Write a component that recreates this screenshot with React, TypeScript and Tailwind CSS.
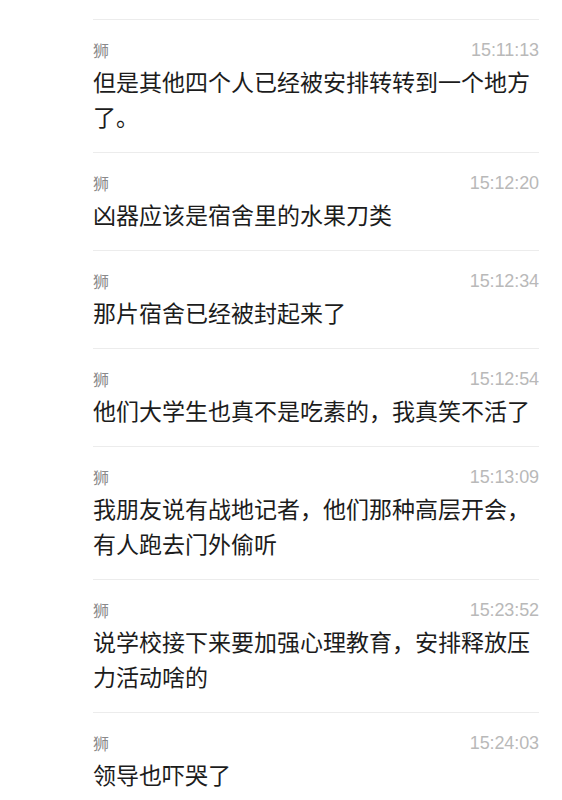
import React, { FC } from "react";

type Msg = {
    name: string;
    time: string;
    text: string;
};

const mensajes: Msg[] = [
    { name: "狮", time: "15:11:13", text: "但是其他四个人已经被安排转转到一个地方了。" },
    { name: "狮", time: "15:12:20", text: "凶器应该是宿舍里的水果刀类" },
    { name: "狮", time: "15:12:34", text: "那片宿舍已经被封起来了" },
    { name: "狮", time: "15:12:54", text: "他们大学生也真不是吃素的，我真笑不活了" },
    { name: "狮", time: "15:13:09", text: "我朋友说有战地记者，他们那种高层开会，有人跑去门外偷听" },
    { name: "狮", time: "15:23:52", text: "说学校接下来要加强心理教育，安排释放压力活动啥的" },
    { name: "狮", time: "15:24:03", text: "领导也吓哭了" },
];

const Item: FC<{ msg: Msg }> = ({ msg }) => {
    return (
        <div className="border-t border-[#ececec] pt-[18px] pb-[18px]">
            <div className="flex justify-between items-center h-[24px]">
                <span className="text-[16px] text-[#8a8a8a] font-['Noto_Sans_CJK_SC',sans-serif]">
                    {msg.name}
                </span>
                <span className="text-[18px] text-[#b9b9b9] font-['Liberation_Sans',sans-serif] tracking-[-0.1px]">
                    {msg.time}
                </span>
            </div>
            <div className="mt-[2px] text-[23px] leading-[35px] text-[#1c1c1c] font-['Noto_Sans_CJK_SC',sans-serif]">
                {msg.text}
            </div>
        </div>
    );
};

const App: FC = () => {
    return (
        <div className="w-[562px] h-[800px] bg-white overflow-hidden pt-[19px] pl-[93px] pr-[23px]">
            {mensajes.map((m, i) => (
                <Item msg={m} key={i} />
            ))}
        </div>
    );
};

export default App;
